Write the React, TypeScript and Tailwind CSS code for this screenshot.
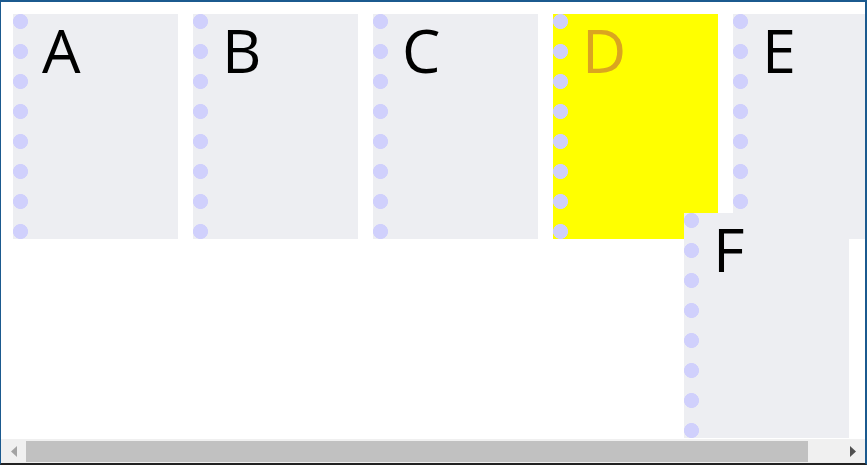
import { ReactElement } from 'react';

const letters = ['A', 'B', 'C', 'D', 'E'];

const Card = ({ label, hot }: { label: string; hot?: boolean }): ReactElement => {
  return (
    <div
      className={`shrink-0 w-[165px] h-[225px] pl-[29px] pt-[5px]
        bg-[radial-gradient(circle_at_7.5px_7.5px,#d0d0fc_7.2px,transparent_7.8px)] bg-[length:15px_30px] bg-repeat-y
        ${hot ? 'bg-[#ffff00] text-[#daa520]' : 'bg-[#edeef2] text-black'}`}
    >
      <span className="block text-[61px] leading-none font-['Open_Sans',sans-serif]">{label}</span>
    </div>
  );
};

export default function App(): ReactElement {
  return (
    <div className="w-[867px] h-[465px] flex flex-col bg-white border-l border-t-2 border-r-2 border-b-2 border-[#1b5a8f] border-b-[#222]">
      <div className="flex-1 overflow-hidden">
        <div className="flex gap-[15px] pl-[12px] pt-[12px] w-max">
          {letters.map((l) => (
            <Card key={l} label={l} hot={l === 'D'} />
          ))}
        </div>
        <div className="relative ml-[683px] -mt-[26px] w-max">
          <Card label="F" />
        </div>
      </div>

      {/* horizontal scrollbar */}
      <div className="h-[24px] shrink-0 flex items-start bg-[#f0f0f0]">
        <div className="w-[25px] h-full flex items-center justify-center">
          <svg width="6" height="11" viewBox="0 0 6 11">
            <path d="M6 0 L0 5.5 L6 11 Z" fill="#a3a3a3" />
          </svg>
        </div>
        <div className="w-[782px] h-[21px] mt-[2px] bg-[#c1c1c1]" />
        <div className="flex-1" />
        <div className="w-[25px] h-full flex items-center justify-center">
          <svg width="6" height="11" viewBox="0 0 6 11">
            <path d="M0 0 L6 5.5 L0 11 Z" fill="#505050" />
          </svg>
        </div>
      </div>
    </div>
  );
}
